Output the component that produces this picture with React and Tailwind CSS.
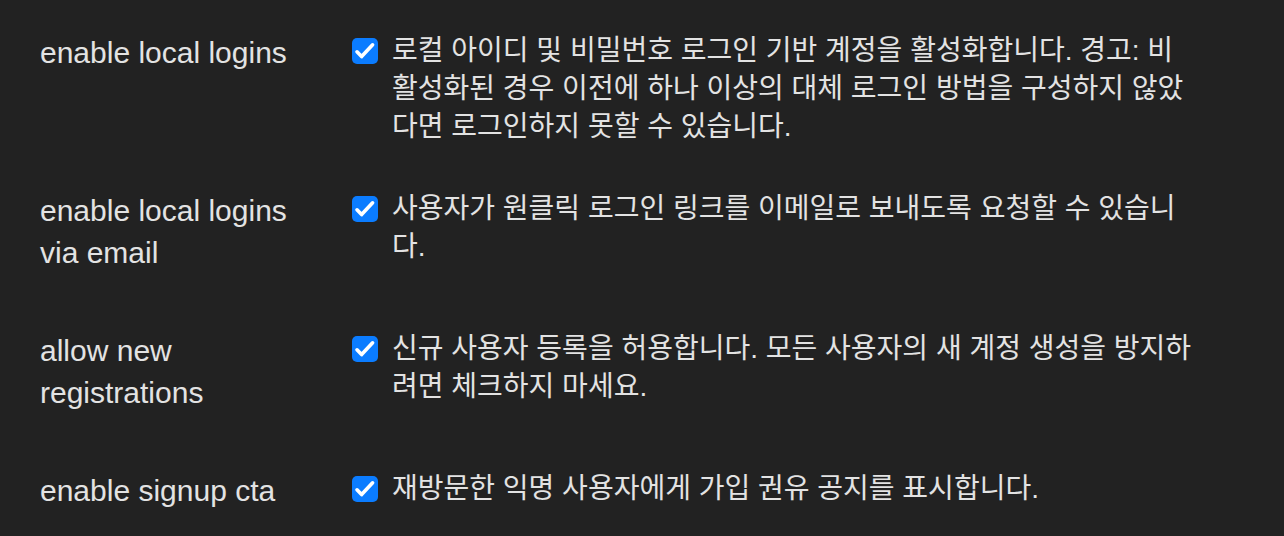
import React from "react";

const rows = [
  {
    label: "enable local logins",
    text: "로컬 아이디 및 비밀번호 로그인 기반 계정을 활성화합니다. 경고: 비활성화된 경우 이전에 하나 이상의 대체 로그인 방법을 구성하지 않았다면 로그인하지 못할 수 있습니다.",
  },
  {
    label: "enable local logins via email",
    text: "사용자가 원클릭 로그인 링크를 이메일로 보내도록 요청할 수 있습니다.",
  },
  {
    label: "allow new registrations",
    text: "신규 사용자 등록을 허용합니다. 모든 사용자의 새 계정 생성을 방지하려면 체크하지 마세요.",
  },
  {
    label: "enable signup cta",
    text: "재방문한 익명 사용자에게 가입 권유 공지를 표시합니다.",
  },
];

function Check() {
  return (
    <div className="mt-[6px] h-[26px] w-[26px] shrink-0 rounded-[5px] bg-[#0b7cff]">
      <svg width="26" height="26" viewBox="0 0 26 26" fill="none">
        <path
          d="M5 13.8 L9.6 18.6 L20.6 6.8"
          stroke="white"
          strokeWidth="3.6"
          strokeLinecap="round"
          strokeLinejoin="round"
        />
      </svg>
    </div>
  );
}

export default function App() {
  return (
    <div
      className="min-h-[536px] w-full bg-[#222222] pl-[40px] pt-[32px] text-[#e3e3e3]"
      style={{ fontFamily: '"Liberation Sans", "Noto Sans CJK KR", sans-serif' }}
    >
      <div className="flex flex-col gap-[44px]">
        {rows.map((r) => (
          <div key={r.label} className="flex items-start">
            <div className="w-[280px] shrink-0 pb-3 text-[30px] leading-[42px]">{r.label}</div>
            <div className="ml-[32px] flex items-start gap-[14px]">
              <Check />
              <p className="w-[803px] text-[28px] leading-[38px]">{r.text}</p>
            </div>
          </div>
        ))}
      </div>
    </div>
  );
}
